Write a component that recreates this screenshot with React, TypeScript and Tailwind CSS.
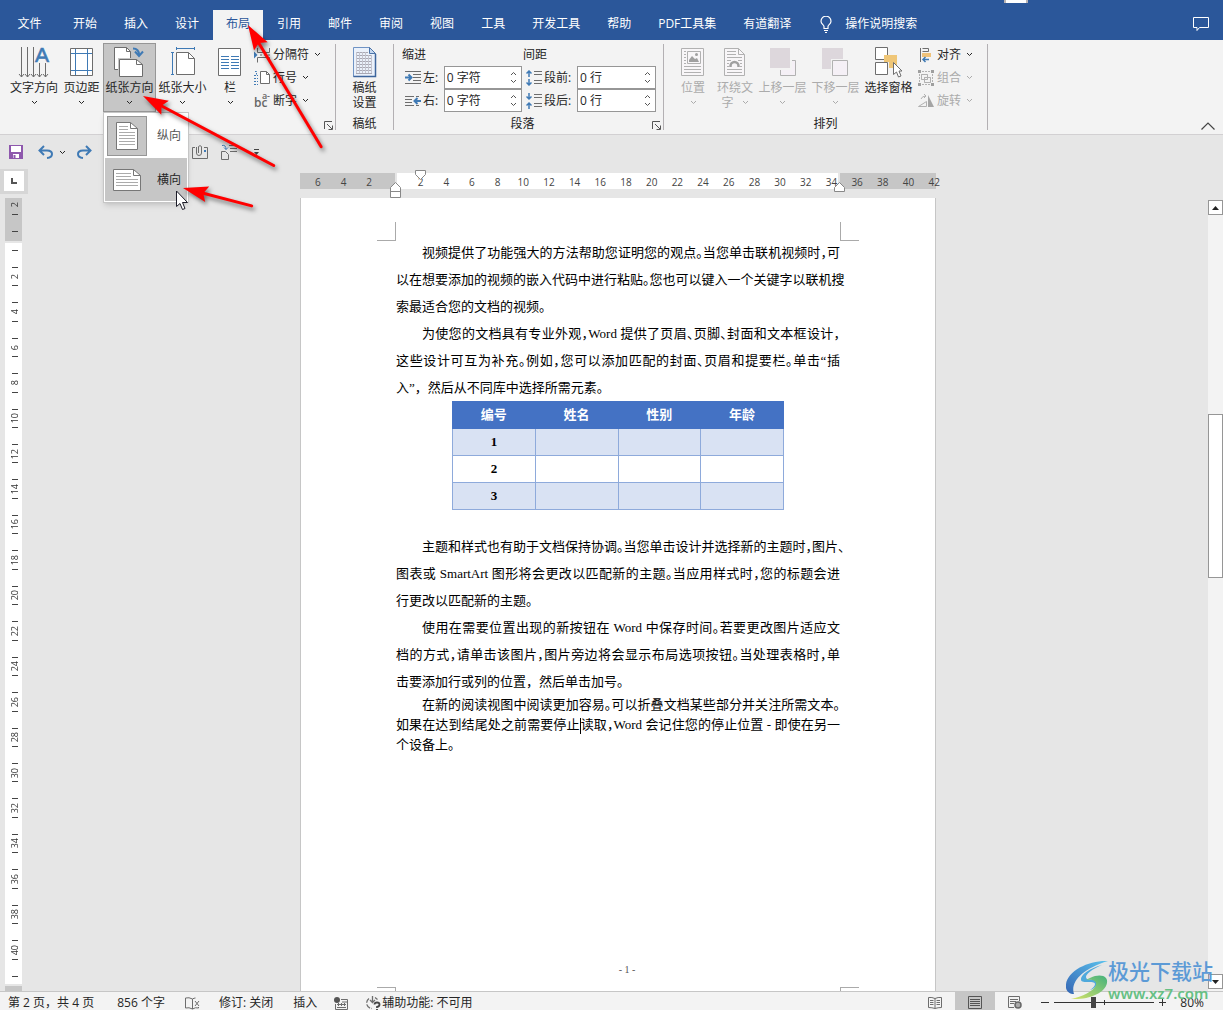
import type { ReactNode } from "react";
import clsx from "clsx";

const TABS = [
  "开始", "插入", "设计", "布局", "引用", "邮件", "审阅", "视图", "工具", "开发工具", "帮助", "PDF工具集", "有道翻译",
];

const GREY = "#6d6d6d";
const BLUE = "#3f7ab5";
const MUTED = "#b1b1b1";

function Chevron({ className }: { className?: string }) {
  return (
    <svg className={clsx("h-[5px] w-[7px] shrink-0", className)} viewBox="0 0 7 5" fill="none" stroke="currentColor">
      <path d="M1 1l2.500 2.500L6 1" />
    </svg>
  );
}

function Launcher({ label }: { label: string }) {
  return (
    <button aria-label={label} className="absolute right-[2px] bottom-1 h-[9px] w-[9px]">
      <svg viewBox="0 0 9 9" fill="none" stroke="#555">
        <path d="M.5 8V.5H8M3 3l5 5M8.500 4.500v4h-4" />
      </svg>
    </button>
  );
}

function Group({ label, children, className, launcher }: {
  label: string;
  children: ReactNode;
  className?: string;
  launcher?: string;
}) {
  return (
    <>
      <section className={clsx("relative flex flex-col pt-[3px]", className)}>
        <div className="flex h-[69px]">{children}</div>
        <div className="h-[22px] text-center leading-6">{label}</div>
        {launcher ? <Launcher label={launcher} /> : null}
      </section>
      <div className="my-1 w-px bg-[#b3b0b3]" />
    </>
  );
}

function BigButton({ icon, label, className, disabled, chevron = true }: {
  icon: ReactNode;
  label: ReactNode;
  className?: string;
  disabled?: boolean;
  chevron?: boolean;
}) {
  return (
    <button
      disabled={disabled}
      className={clsx(
        "flex h-[69px] flex-col items-center whitespace-nowrap pt-[3px]",
        disabled && "text-[#ababab]",
        className
      )}
    >
      {icon}
      <span className="leading-5">{label}</span>
      {chevron ? <Chevron className="mt-[2px]" /> : null}
    </button>
  );
}

function SmallButton({ icon, label, disabled }: { icon: ReactNode; label: string; disabled?: boolean }) {
  return (
    <button
      disabled={disabled}
      className={clsx("flex h-[23px] items-center whitespace-nowrap", disabled && "text-[#ababab]")}
    >
      {icon}
      <span className="ml-[3px]">{label}</span>
      <Chevron className="ml-[5px]" />
    </button>
  );
}

function Spin({ id, icon, label, value, labelClass }: {
  id: string;
  icon: ReactNode;
  label: string;
  value: string;
  labelClass: string;
}) {
  return (
    <div className="flex h-[23px] items-center gap-[2px] pl-[3px]">
      {icon}
      <label htmlFor={id} className={clsx("whitespace-nowrap", labelClass)}>{label}</label>
      <div className="flex h-[23px] w-[79px] border border-[#969696] bg-white">
        <input id={id} defaultValue={value} className="w-0 grow pl-[2px] outline-none" />
        <div className="flex w-4 flex-col items-center justify-evenly text-[#555]">
          <button aria-label={`${label} +`}><Chevron className="rotate-180" /></button>
          <button aria-label={`${label} -`}><Chevron /></button>
        </div>
      </div>
    </div>
  );
}

function TextDirectionIcon() {
  return (
    <svg className="h-8 w-8 overflow-visible" viewBox="0 0 32 32" fill="none" stroke={GREY}>
      <path d="M3.500 1v30M9.500 1v30M15.500 1v30M21.500 17v14M27.500 17v14" />
      <path d="M1 28l2.500 3 2.500-3M7 28l2.500 3 2.500-3M13 28l2.500 3 2.500-3M19 28l2.500 3 2.500-3M25 28l2.500 3 2.500-3" />
      <text x="17" y="16" fontSize="21" fontFamily="Liberation Sans" fill={BLUE} stroke={BLUE} strokeWidth="0.600">A</text>
    </svg>
  );
}

function MarginsIcon() {
  return (
    <svg className="h-8 w-8" viewBox="0 0 32 32" fill="none">
      <path d="M4.500 2.500h22v27h-22z" fill="#fff" stroke={GREY} />
      <path d="M9.500 3v26M21.500 3v26M5 7.500h21M5 24.500h21" stroke={BLUE} />
    </svg>
  );
}

function OrientationIcon() {
  return (
    <svg className="h-8 w-8" viewBox="0 0 32 32" fill="none" stroke={GREY}>
      <path d="M.5 1.500h12l4 4v18H.5z" fill="#fff" />
      <path d="M12.500 1.500v4h4" />
      <path d="M5.500 13.500h17l6 5v12h-23z" fill="#fff" stroke="#c6c6c6" strokeWidth="3" />
      <path d="M5.500 13.500h17l6 5v12h-23z" fill="#fff" />
      <path d="M22.500 13.500v5h6" />
      <path d="M19 2.500q6 0 6 6.500M21 5.500l4 4.500 4-4.500" stroke={BLUE} strokeWidth="2" />
    </svg>
  );
}

function SizeIcon() {
  return (
    <svg className="h-8 w-8" viewBox="0 0 32 32" fill="none" stroke={GREY}>
      <path d="M9.500 6.500h12l6 6v16h-18z" fill="#fff" />
      <path d="M21.500 6.500v6h6" />
      <path d="M9 2.500h18M9.500 1v3M27.500 1v3M5.500 7v21M4 6.500h3M4 28.500h3" stroke={BLUE} />
    </svg>
  );
}

function ColumnsIcon() {
  return (
    <svg className="h-8 w-8" viewBox="0 0 32 32" fill="none">
      <path d="M4.500 2.500h22v27h-22z" fill="#fff" stroke={GREY} />
      <path d="M7 10.500h8M7 13.500h8M7 16.500h8M7 19.500h8M7 22.500h8M17 10.500h8M17 13.500h8M17 16.500h8M17 19.500h8M17 22.500h8" stroke={BLUE} />
    </svg>
  );
}

function BreaksIcon() {
  return (
    <svg className="h-4 w-4" viewBox="0 0 16 16" fill="none" stroke={GREY}>
      <path d="M3.500 1v4.500h12V1M3.500 15.500v-5h12v5M6 8h2M10 8h2M14 8h2" />
      <path d="M0 4.500L3.500 8 0 11.500z" fill={BLUE} stroke="none" />
    </svg>
  );
}

function LineNumberIcon() {
  return (
    <svg className="h-4 w-4" viewBox="0 0 16 16" fill="none">
      <path d="M6.500 1.500h6l3 3v9h-9z" fill="#fff" stroke={GREY} />
      <path d="M12.500 1.500v3h3" stroke={GREY} />
      <path d="M1 1.500h1.500v3M0 5.500h4M0 8.500h4M0 11.500h4M0 14.500h4" stroke={BLUE} strokeDasharray="2 1" />
    </svg>
  );
}

function HyphenIcon() {
  return (
    <span className="flex h-4 w-4 flex-col font-semibold text-[#666]">
      <span className="self-end text-[9px] leading-[5px]">a-</span>
      <span className="self-start text-[12px] leading-[9px]">bc</span>
    </span>
  );
}

function GridPaperIcon() {
  return (
    <svg className="h-8 w-8" viewBox="0 0 32 32" fill="none">
      <path d="M4.500 1.500h16l6 6v23h-22z" fill="#eaf1fb" stroke="#6f93c4" />
      <path d="M26.500 8v22.500h-22" stroke="#3d659c" strokeWidth="1.500" />
      <path d="M20.500 1.500v6h6z" fill="#c5d8f0" stroke="#4c74a8" />
      <path d="M7 6.500h12M7 9.500h16M7 12.500h16M7 15.500h16M7 18.500h16M7 21.500h16M7 24.500h16M7 27.500h16" stroke="#a8a8b4" />
      <path d="M7.500 6v21M10.500 6v21M13.500 6v21M16.500 6v21M19.500 9v18M22.500 9v18" stroke="#c4c4ce" />
    </svg>
  );
}

function IndentIcon({ right }: { right?: boolean }) {
  return (
    <svg className="h-4 w-4 shrink-0" viewBox="0 0 16 16" fill="none">
      {right ? (
        <>
          <path d="M0 3.500h9M0 6.500h7M0 9.500h7M0 12.500h9M11 3.500h3M11 12.500h3" stroke={GREY} />
          <path d="M16 8H10M12.500 5L9.500 8l3 3" stroke={BLUE} strokeWidth="2" />
        </>
      ) : (
        <>
          <path d="M0 1.500h16M8 4.500h8M8 7.500h8M8 10.500h8M0 13.500h16" stroke={GREY} />
          <path d="M0 7.500h6M3.500 4.500l3 3-3 3" stroke={BLUE} strokeWidth="2" />
        </>
      )}
    </svg>
  );
}

function SpacingIcon({ after }: { after?: boolean }) {
  return (
    <svg className="h-4 w-4 shrink-0" viewBox="0 0 16 16" fill="none">
      <path d="M8 1.500h8M8 4.500h8M8 10.500h8M8 13.500h8" stroke={GREY} />
      {after ? (
        <path d="M3 0v6M.5 3.500L3 6l2.500-2.500M3 16v-6M.5 12.500L3 10l2.500 2.500" stroke={BLUE} strokeWidth="1.500" />
      ) : (
        <path d="M3 7V1M.5 3.500L3 1l2.500 2.500M3 9v6M.5 12.500L3 15l2.500-2.500" stroke={BLUE} strokeWidth="1.500" />
      )}
    </svg>
  );
}

function PositionIcon() {
  return (
    <svg className="h-8 w-8" viewBox="0 0 32 32" fill="none" stroke={MUTED}>
      <path d="M4.500 2.500h22v27h-22z" fill="#f8f6f8" />
      <path d="M10.500 5.500h13v12h-13z" />
      <path d="M12 16v-2l3-4 3 3 2-1 2 4z" fill="#a0a0a0" stroke="none" />
      <circle cx="19.500" cy="8.500" r="1.500" fill="#a0a0a0" stroke="none" />
      <path d="M7 5.500h2M7 8.500h2M7 11.500h2M7 14.500h2M7 17.500h2M7 20.500h17M7 23.500h17M7 26.500h17" />
    </svg>
  );
}

function WrapIcon() {
  return (
    <svg className="h-8 w-8" viewBox="0 0 32 32" fill="none" stroke={MUTED}>
      <path d="M5.500 2.500h14l6 6v21h-20z" fill="#f8f6f8" />
      <path d="M19.500 2.500v6h6M8 5.500h9M8 8.500h9M8 11.500h15M8 14.500h4M19 14.500h4M8 17.500h2M21 17.500h2M8 20.500h2M21 20.500h2M8 23.500h15M8 26.500h15" />
      <path d="M11.500 21v-1a4 4 0 0 1 8 0v1" stroke="#a0a0a0" strokeWidth="2.500" />
    </svg>
  );
}

function ForwardIcon() {
  return (
    <svg className="h-8 w-8" viewBox="0 0 32 32" fill="none">
      <path d="M13.500 14.500h15v15h-15z" fill="#f5f0f6" stroke={MUTED} />
      <path d="M2 1h22v22H2z" fill="#ddd7dc" stroke="#f3f3f3" strokeWidth="2" />
    </svg>
  );
}

function BackwardIcon() {
  return (
    <svg className="h-8 w-8" viewBox="0 0 32 32" fill="none">
      <path d="M2 2h21v21H2z" fill="#ddd7dc" />
      <path d="M12.500 14.500h15v15h-15z" stroke="#f3f3f3" strokeWidth="3" />
      <path d="M12.500 14.500h15v15h-15z" fill="#f5f0f6" stroke={MUTED} />
    </svg>
  );
}

function SelectionPaneIcon() {
  return (
    <svg className="h-8 w-8" viewBox="0 0 32 32" fill="none">
      <path d="M2.500 1.500h12v12h-12zM2.500 16.500h12v12h-12z" fill="#fff" stroke={GREY} />
      <path d="M11 9h13v13h-8v-6h-5z" fill="#efc677" />
      <path d="M20.500 16.500v12l3-2.500 2 5 2.500-1-2-5h3z" fill="#fff" stroke={GREY} />
    </svg>
  );
}

function AlignIcon() {
  return (
    <svg className="h-4 w-4" viewBox="0 0 16 16" fill="none">
      <path d="M2.500 1v14M4.500 1.500h6v3h-6" stroke={GREY} />
      <path d="M4 6h9v4H4z" fill="#efc27a" />
      <path d="M11 12.500H5M7.500 10L5 12.500 7.500 15" stroke={BLUE} strokeWidth="1.500" />
    </svg>
  );
}

function CombineIcon() {
  return (
    <svg className="h-4 w-4" viewBox="0 0 16 16" fill="none" stroke={MUTED}>
      <path d="M3.500 4.500h6v5h-6zM6.500 7.500h6v5h-6zM4 1.500h8M4 14.500h8M1.500 4v8M14.500 4v8" strokeDasharray="2 1" />
      <path d="M3.500 4.500h6v5h-6zM6.500 7.500h6v5h-6z" />
      <path d="M0 0h3v3H0zM13 0h3v3h-3zM0 13h3v3H0zM13 13h3v3h-3z" fill="#9f9f9f" stroke="none" />
    </svg>
  );
}

function RotateIcon() {
  return (
    <svg className="h-4 w-4" viewBox="0 0 16 16" fill="none" stroke={MUTED}>
      <path d="M.5 13.500h8V8.500zM3 6q1-3 5-3M6 1l2 2-2 2" />
      <path d="M10 2v12h6z" fill="#a5a5a5" stroke="none" />
    </svg>
  );
}

function SheetIcon({ landscape }: { landscape?: boolean }) {
  return landscape ? (
    <svg className="h-[22px] w-7" viewBox="0 0 28 22" fill="none">
      <path d="M.5.5h20l7 6v15H.5z" fill="#fff" stroke="#777" />
      <path d="M20.500.5v6h7" stroke="#777" />
      <path d="M3 4.500h15M3 7.500h15M3 10.500h22M3 13.500h22M3 16.500h22" stroke="#ababab" />
    </svg>
  ) : (
    <svg className="h-7 w-[22px]" viewBox="0 0 22 28" fill="none">
      <path d="M.5.5h14l7 6v21H.5z" fill="#fff" stroke="#777" />
      <path d="M14.500.5v6h7" stroke="#777" />
      <path d="M3 4.500h9M3 7.500h9M3 10.500h16M3 13.500h16M3 16.500h16M3 19.500h16M3 22.500h16" stroke="#ababab" />
    </svg>
  );
}

function OrientationMenu() {
  return (
    <div role="menu" className="absolute top-[69px] left-0 z-10 w-[86px] border border-[#c6c6c6] bg-white p-px shadow-md">
      <button role="menuitem" className="flex h-[44px] w-full items-center pl-[2px]">
        <span className="flex h-10 w-10 items-center justify-center border border-[#969696] bg-[#c6c6c6]">
          <SheetIcon />
        </span>
        <span className="ml-[10px] text-[#555]">纵向</span>
      </button>
      <button role="menuitem" className="flex h-[43px] w-full items-center bg-[#c6c6c6] pl-2">
        <SheetIcon landscape />
        <span className="ml-4">横向</span>
      </button>
    </div>
  );
}

function TitleTabs() {
  return (
    <header className="relative flex h-10 items-end bg-[#2b579a] text-white">
      <nav className="flex gap-px">
        <a href="#file" className="flex h-[30px] w-[59px] items-center justify-center pb-[2px]">文件</a>
        {TABS.map((tab) => (
          <a
            key={tab}
            href={`#${tab}`}
            className={clsx(
              "flex h-[30px] items-center whitespace-nowrap px-[13px] pb-[2px]",
              tab === "布局" && "bg-[#f3f3f3] text-[#2b579a]"
            )}
          >
            {tab}
          </a>
        ))}
      </nav>
      <button className="ml-4 flex h-[30px] items-center gap-[13px] pb-[2px]">
        <svg className="h-[17px] w-3" viewBox="0 0 12 17" fill="none" stroke="#fff">
          <path d="M4 12.500v-2C4 9 1 8 1 5.200a5 5 0 0 1 10 0C11 8 8 9 8 10.500v2zM4 14.500h4M5 16.500h2" strokeWidth="1.200" />
        </svg>
        操作说明搜索
      </button>
      <button aria-label="批注" className="mr-[14px] mb-[8px] ml-auto">
        <svg className="h-4 w-4" viewBox="0 0 16 16" fill="none" stroke="#fff">
          <path d="M.5 1.500h15v10H6.500L4 14.500v-3H.5z" />
        </svg>
      </button>
      <div className="absolute top-0 right-[195px] h-[3px] w-6 border-x-2 border-[#b9b4b4] bg-white" />
    </header>
  );
}

function Ribbon() {
  return (
    <div className="flex h-[95px] border-b border-[#d2d0d2] bg-[#f3f3f3]">
      <Group label="" launcher="页面设置" className="w-[335px] pl-2">
        <BigButton icon={<TextDirectionIcon />} label="文字方向" className="w-[52px]" />
        <BigButton icon={<MarginsIcon />} label="页边距" className="w-[43px]" />
        <div className="relative">
          <BigButton
            icon={<OrientationIcon />}
            label="纸张方向"
            className="w-[53px] bg-[#c6c6c6] inset-ring inset-ring-[#969696]"
          />
          <OrientationMenu />
        </div>
        <BigButton icon={<SizeIcon />} label="纸张大小" className="w-[53px]" />
        <BigButton icon={<ColumnsIcon />} label="栏" className="w-[42px]" />
        <div className="ml-[3px]">
          <SmallButton icon={<BreaksIcon />} label="分隔符" />
          <SmallButton icon={<LineNumberIcon />} label="行号" />
          <SmallButton icon={<HyphenIcon />} label="断字" />
        </div>
      </Group>

      <Group label="稿纸" className="w-[57px]">
        <button className="flex w-full flex-col items-center pt-[3px] leading-[15px]">
          <GridPaperIcon />
          <span className="mt-[2px]">稿纸</span>
          <span>设置</span>
        </button>
      </Group>

      <Group label="段落" launcher="段落设置" className="w-[269px] pr-5 pl-2">
        <div className="w-[120px] shrink-0">
          <div className="h-[23px] leading-[23px]">缩进</div>
          <Spin id="indent-left" icon={<IndentIcon />} label="左:" value="0 字符" labelClass="w-[19px]" />
          <Spin id="indent-right" icon={<IndentIcon right />} label="右:" value="0 字符" labelClass="w-[19px]" />
        </div>
        <div className="ml-px">
          <div className="h-[23px] leading-[23px]">间距</div>
          <Spin id="space-before" icon={<SpacingIcon />} label="段前:" value="0 行" labelClass="w-[31px]" />
          <Spin id="space-after" icon={<SpacingIcon after />} label="段后:" value="0 行" labelClass="w-[31px]" />
        </div>
      </Group>

      <Group label="排列" className="w-[323px] px-[5px]">
        <BigButton disabled icon={<PositionIcon />} label="位置" className="w-12" />
        <BigButton
          disabled
          chevron={false}
          icon={<WrapIcon />}
          className="w-9"
          label={
            <span className="flex flex-col items-center pt-[2px] leading-[15px]">
              <span>环绕文</span>
              <span className="flex items-center gap-2">字 <Chevron /></span>
            </span>
          }
        />
        <BigButton disabled icon={<ForwardIcon />} label="上移一层" className="ml-[3px] w-[53px]" />
        <BigButton disabled icon={<BackwardIcon />} label="下移一层" className="w-[53px]" />
        <BigButton icon={<SelectionPaneIcon />} label="选择窗格" chevron={false} className="w-[53px]" />
        <div className="ml-[3px]">
          <SmallButton icon={<AlignIcon />} label="对齐" />
          <SmallButton disabled icon={<CombineIcon />} label="组合" />
          <SmallButton disabled icon={<RotateIcon />} label="旋转" />
        </div>
      </Group>

      <button aria-label="折叠功能区" className="mt-auto mr-2 mb-1 ml-auto">
        <svg className="h-2 w-[14px]" viewBox="0 0 14 8" fill="none" stroke="#444">
          <path d="M.5 7.500L7 1l6.500 6.500" strokeWidth="1.200" />
        </svg>
      </button>
    </div>
  );
}

function QuickAccess() {
  return (
    <div className="flex h-[34px] items-center pl-[9px]">
      <button aria-label="保存">
        <svg className="h-[14px] w-[14px]" viewBox="0 0 14 14" fill="none">
          <path d="M0 0h14v14H0z" fill="#8e58ad" />
          <path d="M2 1h10v6H2zM4 9h6v4H4z" fill="#fff" />
          <path d="M4.500 10h2v3h-2z" fill="#8e58ad" />
        </svg>
      </button>
      <button aria-label="撤消" className="ml-[15px]">
        <svg className="h-[14px] w-[15px]" viewBox="0 0 15 14" fill="none" stroke={BLUE} strokeWidth="2">
          <path d="M6 1L1.500 5.500 6 10M2 5.500h7q5 0 5 3.500t-5 4" />
        </svg>
      </button>
      <Chevron className="ml-[6px]" />
      <button aria-label="重做" className="ml-[11px]">
        <svg className="h-[14px] w-[15px]" viewBox="0 0 15 14" fill="none" stroke={BLUE} strokeWidth="2">
          <path d="M9 1l4.500 4.500L9 10M13 5.500H6Q1 5.500 1 9t5 4" />
        </svg>
      </button>
      <button aria-label="附件" className="ml-[100px]">
        <svg className="h-4 w-4" viewBox="0 0 16 16" fill="none" stroke={GREY}>
          <path d="M3 3.500H.5v11h15v-11H12M4.500 3v6a2.500 2.500 0 0 0 5 0V2.500a2 2 0 0 0-3 0V9" />
          <path d="M12 6h2v2h-2z" fill={BLUE} stroke="none" />
        </svg>
      </button>
      <button aria-label="纸张" className="ml-[13px]">
        <svg className="h-4 w-4" viewBox="0 0 16 16" fill="none" stroke={GREY}>
          <path d="M.5 7.500h4l3 3v5h-7zM8 1.500h8M9 4.500h7M9 7.500h7" />
          <path d="M1 1.500q4-1 4 4M3 3.500l2 2 2-2" stroke={BLUE} />
        </svg>
      </button>
      <button aria-label="自定义" className="ml-[17px]">
        <svg className="h-[6px] w-[5px]" viewBox="0 0 5 6" fill="#444">
          <path d="M0 0h5v1H0zM0 3h5L2.500 6z" />
        </svg>
      </button>
    </div>
  );
}

// The vertical scale starts above the text area and ends past its last line
const V_MARKS = ["2", "", ...Array.from({ length: 20 }, (_, i) => String(i * 2 + 2)), ""];

function VerticalRuler() {
  return (
    <div className="ml-[5px] grid w-[17px] grow text-[9px] leading-none text-[#333]">
      <div className="col-start-1 row-start-1 flex flex-col gap-[2px]">
        <div className="h-[43px] bg-[#c6c6c6]" />
        <div className="grow bg-white" />
        <div className="h-[5px] bg-[#c6c6c6]" />
      </div>
      <div className="col-start-1 row-start-1 grid grid-rows-[25fr_repeat(21,35fr)_23fr] pl-[2px]">
        {V_MARKS.map((mark, i) => {
          const first = i === 0;
          const last = i === V_MARKS.length - 1;
          return (
            <div key={i} className={clsx("flex flex-col items-center justify-between pb-2", first ? "pt-1" : "pt-2")}>
              {first ? null : <i className="h-px w-[6px] bg-[#444]" />}
              <span className="rotate-180 [writing-mode:vertical-rl]">{mark}</span>
              {last ? null : <i className="h-px w-[6px] bg-[#444]" />}
            </div>
          );
        })}
      </div>
    </div>
  );
}

const H_MARKS = ["6", "4", "2", "", ...Array.from({ length: 21 }, (_, i) => String(i * 2 + 2))];

function HorizontalRuler() {
  return (
    <div className="relative grid h-4 w-[636px] grid-cols-[636px] text-[10px] leading-[18px] text-[#444]">
      <div className="col-start-1 row-start-1 flex h-4 gap-[2px]">
        <div className="w-[95px] bg-[#c6c6c6]" />
        <div className="grow bg-white" />
        <div className="w-[96px] bg-[#c6c6c6]" />
      </div>
      <div className="col-start-1 row-start-1 ml-[5px] grid w-[642px] grid-cols-[repeat(25,1fr)] text-center">
        {H_MARKS.map((mark, i) => (
          <span key={i}>{mark}</span>
        ))}
      </div>
      <svg className="absolute -top-[3px] left-[115px] h-[10px] w-[11px]" viewBox="0 0 11 10" fill="#fff" stroke="#888">
        <path d="M.5.5h10v4l-5 5-5-5z" />
      </svg>
      <svg className="absolute top-[9px] left-[90px] h-4 w-[11px]" viewBox="0 0 11 16" fill="#fff" stroke="#888">
        <path d="M.5 15.500v-10l5-5 5 5v10zM.5 9.500h10" />
      </svg>
      <svg className="absolute top-[9px] right-[91px] h-[10px] w-[11px]" viewBox="0 0 11 10" fill="#fff" stroke="#888">
        <path d="M.5 9.500v-4l5-5 5 5v4z" />
      </svg>
    </div>
  );
}

// Full lines run to the right margin with half-width punctuation
function Line({ children, indent, full }: { children: ReactNode; indent?: boolean; full?: boolean }) {
  return (
    <span
      className={clsx(
        "block whitespace-nowrap",
        indent && "pl-[26px]",
        full && "text-justify [font-feature-settings:'halt'] [text-align-last:justify]"
      )}
    >
      {children}
    </span>
  );
}

function GradeTable() {
  return (
    <table className="ml-14 w-[332px] table-fixed border-collapse text-center font-bold leading-[26px]">
      <thead>
        <tr className="bg-[#4472c4] text-white">
          {["编号", "姓名", "性别", "年龄"].map((h) => (
            <th key={h} scope="col" className="h-[27px] border border-[#4472c4] p-0">{h}</th>
          ))}
        </tr>
      </thead>
      <tbody>
        {["1", "2", "3"].map((n) => (
          <tr key={n} className="odd:bg-[#d9e2f3]">
            <th scope="row" className="h-[27px] border border-[#8eaadb] p-0">{n}</th>
            <td className="border border-[#8eaadb]" />
            <td className="border border-[#8eaadb]" />
            <td className="border border-[#8eaadb]" />
          </tr>
        ))}
      </tbody>
    </table>
  );
}

function Page() {
  return (
    <div className="mt-[9px] flex w-[636px] grow flex-col border-x border-[#c6c6c6] bg-white font-['Liberation_Serif','Noto_Sans_CJK_SC',serif] text-[13px] text-black">
      <div className="mt-6 flex h-[19px] justify-between px-[76px]">
        <i className="w-[19px] border-r border-b border-[#aaa]" />
        <i className="w-[19px] border-b border-l border-[#aaa]" />
      </div>
      <article className="-mt-[2px] ml-[95px] w-[444px] leading-[27px]">
        <p>
          <Line indent full>视频提供了功能强大的方法帮助您证明您的观点。当您单击联机视频时，可</Line>
          <Line full>以在想要添加的视频的嵌入代码中进行粘贴。您也可以键入一个关键字以联机搜</Line>
          <Line>索最适合您的文档的视频。</Line>
        </p>
        <p>
          <Line indent full>为使您的文档具有专业外观，Word 提供了页眉、页脚、封面和文本框设计，</Line>
          <Line full>这些设计可互为补充。例如，您可以添加匹配的封面、页眉和提要栏。单击“插</Line>
          <Line>入”，然后从不同库中选择所需元素。</Line>
        </p>
        <GradeTable />
        <p className="mt-[23px]">
          <Line indent full>主题和样式也有助于文档保持协调。当您单击设计并选择新的主题时，图片、</Line>
          <Line full>图表或 SmartArt 图形将会更改以匹配新的主题。当应用样式时，您的标题会进</Line>
          <Line>行更改以匹配新的主题。</Line>
        </p>
        <p>
          <Line indent full>使用在需要位置出现的新按钮在 Word 中保存时间。若要更改图片适应文</Line>
          <Line full>档的方式，请单击该图片，图片旁边将会显示布局选项按钮。当处理表格时，单</Line>
          <Line>击要添加行或列的位置，然后单击加号。</Line>
        </p>
        <p className="leading-5">
          <Line indent full>在新的阅读视图中阅读更加容易。可以折叠文档某些部分并关注所需文本。</Line>
          <Line full>
            如果在达到结尾处之前需要停止
            <i className="inline-block h-4 w-px bg-black align-middle" />
            读取，Word 会记住您的停止位置 - 即使在另一
          </Line>
          <Line>个设备上。</Line>
        </p>
      </article>
      <footer className="mt-auto">
        <div className="pl-[18px] text-center text-[10px] leading-3 text-[#555]">- 1 -</div>
        <div className="mt-[11px] flex h-1 justify-between px-[76px]">
          <i className="w-[19px] border-t border-r border-[#aaa]" />
          <i className="w-[19px] border-t border-l border-[#aaa]" />
        </div>
      </footer>
    </div>
  );
}

function ScrollBar() {
  return (
    <div className="mt-[31px] flex w-[15px] flex-col bg-[#f3f3f3]">
      <button aria-label="向上滚动" className="flex h-[15px] items-center justify-center border border-[#969696] bg-white">
        <svg className="h-1 w-[7px]" viewBox="0 0 7 4"><path d="M0 4h7L3.500 0z" fill="#222" /></svg>
      </button>
      <div className="grow-[199]" />
      <div className="h-[164px] border border-[#969696] bg-white" />
      <div className="grow-[397]" />
      <button aria-label="向下滚动" className="mb-[2px] flex h-[15px] items-center justify-center border border-[#969696] bg-white">
        <svg className="h-1 w-[7px]" viewBox="0 0 7 4"><path d="M0 0h7L3.500 4z" fill="#222" /></svg>
      </button>
    </div>
  );
}

function StatusBar() {
  return (
    <footer className="flex h-[19px] items-center overflow-hidden border-t border-[#c6c6c6] bg-[#f3f3f3] pt-1 whitespace-nowrap">
      <span className="ml-2">第 2 页，共 4 页</span>
      <span className="ml-[23px]">856 个字</span>
      <svg className="ml-5 h-[13px] w-[15px]" viewBox="0 0 15 13" fill="none" stroke={GREY}>
        <path d="M7.500 2Q4 0 .5 1v10q3.500-1 7 1V2q1.500-1 3-1M7.500 12q3-2 6-1v-1M10 4l4 5M14 4l-4 5" />
      </svg>
      <span className="ml-[19px]">修订: 关闭</span>
      <span className="ml-5">插入</span>
      <svg className="ml-[17px] h-[13px] w-[14px]" viewBox="0 0 14 13" fill="none" stroke={GREY}>
        <path d="M7 2.500h6.500v10H1.500V7M3 7.500h9M3 10.500h9M8 5h5" />
        <path d="M4.500 6v6M7.500 6v6M10.500 6v6" strokeDasharray="1 1" />
        <circle cx="3" cy="3" r="3" fill="#555" stroke="none" />
      </svg>
      <svg className="ml-[17px] h-[15px] w-4" viewBox="0 0 16 15" fill="none" stroke={GREY}>
        <path d="M4 2.500A5.500 5.500 0 0 0 7 12.500" strokeWidth="1.300" strokeDasharray="5 1.500" />
        <path d="M7.500 0v6M5 4l2.500 2.500L10 4M10 1.500l2.500 2" strokeWidth="1.300" />
        <path d="M9.500 8.500q0-2 2.500-2t2.500 2-2.500 2.500v1M12 13v2" stroke="#444" strokeWidth="1.800" />
      </svg>
      <span className="ml-px">辅助功能: 不可用</span>

      <div className="-mt-1 ml-auto flex h-[18px] items-center">
        <button aria-label="阅读视图" className="mt-[3px]">
          <svg className="h-3 w-[14px]" viewBox="0 0 14 12" fill="none" stroke={GREY}>
            <path d="M7 1.500Q4 0 .5.500v10q3.500 0 6.500 1 3-1 6.500-1V.5Q10 0 7 1.500v10M2 3.500h3.500M2 5.500h3.500M2 7.500h3.500M8.500 3.500H12M8.500 5.500H12M8.500 7.500H12" />
          </svg>
        </button>
        <button aria-label="页面视图" className="ml-[13px] flex h-full w-10 items-center justify-center bg-[#c6c6c6] pt-[3px]">
          <svg className="h-[13px] w-[14px]" viewBox="0 0 14 13" fill="none" stroke="#555">
            <path d="M.5.500h13v12H.5zM2 3.500h10M2 5.500h10M2 7.500h10M2 9.500h10" />
          </svg>
        </button>
        <button aria-label="Web 版式视图" className="mt-[3px] ml-[13px]">
          <svg className="h-[13px] w-[14px]" viewBox="0 0 14 13" fill="none" stroke={GREY}>
            <path d="M6 11.500H.5V.5h11V5M2 3.500h8M2 5.500h6M2 7.500h4" />
            <circle cx="10" cy="9" r="3" fill="#aaa" stroke="#666" strokeWidth="1.500" />
          </svg>
        </button>
        <button aria-label="缩小" className="mt-[2px] ml-[19px] h-px w-2 bg-[#333]" />
        <div className="mt-[3px] ml-[5px] grid w-[100px] items-center">
          <i className="col-start-1 row-start-1 h-[5px] w-px justify-self-center bg-[#333]" />
          <input
            type="range"
            aria-label="显示比例"
            min="0"
            max="100"
            defaultValue="39"
            className="col-start-1 row-start-1 h-3 w-full appearance-none bg-transparent [&::-webkit-slider-runnable-track]:h-px [&::-webkit-slider-runnable-track]:bg-[#333] [&::-webkit-slider-thumb]:-mt-[5px] [&::-webkit-slider-thumb]:h-[11px] [&::-webkit-slider-thumb]:w-[5px] [&::-webkit-slider-thumb]:appearance-none [&::-webkit-slider-thumb]:bg-[#444]"
          />
        </div>
        <button aria-label="放大" className="mt-[2px] ml-[5px]">
          <svg className="h-[7px] w-[7px]" viewBox="0 0 7 7" stroke="#333"><path d="M3.500 0v7M0 3.500h7" /></svg>
        </button>
        <span className="mt-1 mr-[19px] ml-[14px]">80%</span>
      </div>
    </footer>
  );
}

function Arrow({ x, y, angle, length }: { x: number; y: number; angle: number; length: number }) {
  return (
    <g transform={`translate(${x} ${y}) rotate(${angle})`}>
      <path d={`M18 0H${length}`} stroke="#f00" strokeWidth="3" strokeLinecap="round" />
      <path d="M0 0l25-8-4 8 4 8z" fill="#f00" />
    </g>
  );
}

function Annotations() {
  return (
    <svg className="pointer-events-none absolute top-0 left-0 z-20 h-[220px] w-[340px]" viewBox="0 0 340 220">
      <g className="drop-shadow-[2px_3px_2px_rgba(0,0,0,0.5)]">
        <Arrow x={248} y={25} angle={59} length={142} />
        <Arrow x={143} y={96} angle={28} length={148} />
        <Arrow x={183} y={188} angle={14.600} length={71} />
      </g>
      <path d="M176.500 191v15.500l3.500-3 2.500 6 2.500-1-2.500-6h5z" fill="#fff" stroke="#1c1c28" />
    </svg>
  );
}

function Watermark() {
  return (
    <div className="pointer-events-none absolute right-[10px] bottom-2 z-20 flex items-center">
      <svg className="h-[42px] w-[42px]" viewBox="0 0 42 42" fill="none">
        <defs>
          <linearGradient id="wave" x1="0" y1="1" x2="1" y2="0">
            <stop offset="0" stopColor="#3566b4" />
            <stop offset="1" stopColor="#5cc3ee" />
          </linearGradient>
          <linearGradient id="leaf" x1="0" y1="1" x2="1" y2="0">
            <stop offset="0" stopColor="#d9e36a" />
            <stop offset="1" stopColor="#43b17c" />
          </linearGradient>
        </defs>
        <path d="M42 1C22 0-2 12 0 28c1 4 4 6 8 6C4 22 16 9 42 1z" fill="url(#wave)" />
        <path d="M36 5C24 8 14 15 15 20c1 4 13 0 14 4 0 2-2 4-5 6 6-2 8-6 6-9-3-3-10 0-10-4 0-3 6-8 16-12z" fill="#4fa9dc" />
        <path d="M29 16c9-2 13 2 12 7-2 10-18 17-36 16 11-2 23-8 25-14 1-4-3-6-10-5 3-2 6-3 9-4z" fill="url(#leaf)" />
      </svg>
      <div className="font-['Noto_Sans','Noto_Sans_CJK_SC',sans-serif] leading-none">
        <div className="text-[21px] font-medium text-[#5c9ad6]">极光下载站</div>
        <div className="mt-1 text-[15px] font-semibold text-[#66c084]">www.xz7.com</div>
      </div>
    </div>
  );
}

export default function App() {
  return (
    <div className="relative flex min-h-screen flex-col overflow-hidden bg-[#e6e6e6] font-['Open_Sans','Noto_Sans_CJK_SC',sans-serif] text-[12px] leading-4 text-[#262626]">
      <TitleTabs />
      <Ribbon />
      <QuickAccess />
      <main className="flex grow">
        <div className="flex w-7 flex-col">
          <div className="mb-1 h-[25px] bg-[#d6d6d6] pt-[2px] pl-1">
            <button aria-label="制表符" className="flex h-5 w-5 items-center justify-center bg-white">
              <svg className="h-[6px] w-[6px]" viewBox="0 0 6 6" fill="none" stroke="#555">
                <path d="M1 0v5h5" strokeWidth="2" />
              </svg>
            </button>
          </div>
          <VerticalRuler />
        </div>
        <div className="flex grow flex-col items-center pt-1">
          <HorizontalRuler />
          <Page />
        </div>
        <ScrollBar />
      </main>
      <StatusBar />
      <Annotations />
      <Watermark />
    </div>
  );
}
